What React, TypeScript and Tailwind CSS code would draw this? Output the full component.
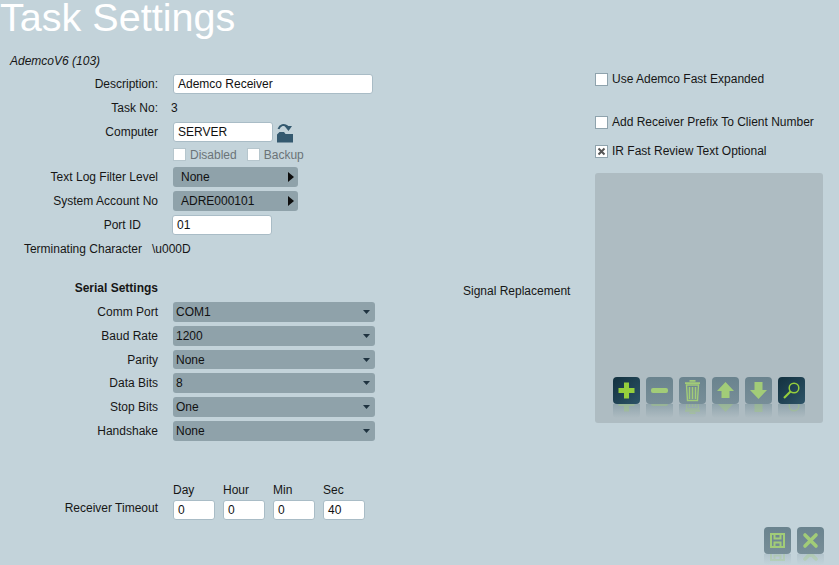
import React from 'react';

const labelCls = 'text-right text-[12px] text-[#161616] shrink-0';

// square tool button with the little mirrored glow underneath
const ToolButton = ({ active, faint, children }: { active?: boolean; faint?: boolean; children: React.ReactNode }) => (
    <div className="relative w-[27px] h-[27px]">
        <div
            className={
                active
                    ? 'w-full h-full rounded-[4px] bg-gradient-to-br from-[#13313f] to-[#2d5468] flex items-center justify-center'
                    : 'w-full h-full rounded-[4px] bg-gradient-to-b from-[#6a838e] to-[#778e98] flex items-center justify-center'
            }
        >
            <svg width="27" height="27" viewBox="0 0 27 27" className={active ? 'text-[#96cf3c]' : 'text-[#a2cc78]'}>{children}</svg>
        </div>
        <div
            className={
                faint
                    ? 'absolute left-0 top-[27px] w-[27px] h-[11px] overflow-hidden rounded-b-[4px] bg-gradient-to-b from-[#b4c6ce] to-transparent'
                    : 'absolute left-0 top-[27px] w-[27px] h-[14px] overflow-hidden rounded-b-[4px] bg-gradient-to-b from-[#90a4ac] to-transparent'
            }
        >
            <svg width="27" height="27" viewBox="0 0 27 27" className={`-scale-y-100 absolute left-0 top-[-14px] text-[#a2cc78] ${faint ? 'opacity-30' : 'opacity-40'}`}>{children}</svg>
        </div>
    </div>
);

const Check = ({ checked, disabled }: { checked?: boolean; disabled?: boolean }) => (
    <span className={`w-[13px] h-[13px] shrink-0 bg-white border flex items-center justify-center ${disabled ? 'border-[#b6c6cd]' : 'border-[#8fa3ad]'}`}>
        {checked && (
            <svg width="9" height="9" viewBox="0 0 9 9">
                <path d="M1.5 1.5L7.5 7.5M7.5 1.5L1.5 7.5" stroke="#555" strokeWidth="2" />
            </svg>
        )}
    </span>
);

const TextBox = ({ value, className }: { value: string; className: string }) => (
    <div className={`h-[20px] bg-white border border-[#a9bcc6] rounded-[3px] flex items-center text-[12px] text-[#111] ${className}`}>{value}</div>
);

const ArrowSelect = ({ value }: { value: string }) => (
    <div className="w-[125px] h-[20px] rounded-[3px] bg-[#8fa2aa] flex items-center justify-between pl-2 pr-[4px] text-[12px] text-[#111]">
        <span>{value}</span>
        <svg width="6" height="10" viewBox="0 0 6 10"><path d="M0 0L6 5L0 10Z" fill="#0d0d0d" /></svg>
    </div>
);

const serialRows = [
    { label: 'Comm Port', value: 'COM1', cls: 'h-[20px] mb-[4px]' },
    { label: 'Baud Rate', value: '1200', cls: 'h-[20px] mb-[4px]' },
    { label: 'Parity', value: 'None', cls: 'h-[19px] mb-[4px]' },
    { label: 'Data Bits', value: '8', cls: 'h-[20px] mb-[4px]' },
    { label: 'Stop Bits', value: 'One', cls: 'h-[20px] mb-[4px]' },
    { label: 'Handshake', value: 'None', cls: 'h-[20px] mb-0' },
];

const timeoutFields = [
    { label: 'Day', value: '0' },
    { label: 'Hour', value: '0' },
    { label: 'Min', value: '0' },
    { label: 'Sec', value: '40' },
];

export default function App() {
    return (
        <div className="w-[839px] h-[565px] overflow-hidden bg-[#c3d3da] font-['Liberation_Sans',Arial,sans-serif]">
            {/* title */}
            <div className="h-[52px] pt-[1px]">
                <h1 className="text-[39.6px] leading-[32px] font-normal text-white">Task Settings</h1>
            </div>

            <div className="flex">
                {/* left form */}
                <div className="w-[463px] shrink-0">
                    <p className="h-[16px] pl-[10px] mt-[1px] text-[12px] leading-[16px] italic text-[#161616]">AdemcoV6 (103)</p>

                    <div className="flex items-center mt-[5px] h-[20px]">
                        <span className={`${labelCls} w-[158px]`}>Description:</span>
                        <TextBox value="Ademco Receiver" className="ml-[15px] w-[200px] pl-[4px]" />
                    </div>
                    <div className="flex items-center mt-[4px] h-[20px]">
                        <span className={`${labelCls} w-[158px]`}>Task No:</span>
                        <span className="ml-[13px] text-[12px] text-[#161616]">3</span>
                    </div>
                    <div className="flex items-center mt-[4px] h-[20px]">
                        <span className={`${labelCls} w-[158px]`}>Computer</span>
                        <TextBox value="SERVER" className="ml-[15px] w-[100px] pl-[4px]" />
                        <svg width="18" height="21" viewBox="0 0 18 21" className="ml-[3px]">
                            <path d="M1 12.5L3.5 10H8L9.5 12H17V20.5H1Z" fill="#34596f" />
                            <path d="M2.5 7C4 3 8 1.5 11.5 4.5" fill="none" stroke="#34596f" strokeWidth="2" />
                            <path d="M8.5 4H16L12.5 9Z" fill="#34596f" />
                        </svg>
                    </div>
                    <div className="flex items-center mt-[5px] h-[15px] pl-[173px] text-[12px] text-[#6b7478]">
                        <Check disabled />
                        <span className="ml-[4px]">Disabled</span>
                        <span className="ml-[10px]"><Check disabled /></span>
                        <span className="ml-[4px]">Backup</span>
                    </div>
                    <div className="flex items-center mt-[5px] h-[20px]">
                        <span className={`${labelCls} w-[158px]`}>Text Log Filter Level</span>
                        <div className="ml-[15px]"><ArrowSelect value="None" /></div>
                    </div>
                    <div className="flex items-center mt-[4px] h-[20px]">
                        <span className={`${labelCls} w-[158px]`}>System Account No</span>
                        <div className="ml-[15px]"><ArrowSelect value="ADRE000101" /></div>
                    </div>
                    <div className="flex items-center mt-[4px] h-[20px]">
                        <span className={`${labelCls} w-[141px]`}>Port ID</span>
                        <TextBox value="01" className="ml-[31px] w-[100px] pl-[4px]" />
                    </div>
                    <div className="flex items-center mt-[4px] h-[20px]">
                        <span className={`${labelCls} w-[142px]`}>Terminating Character</span>
                        <span className="ml-[10px] text-[12px] text-[#161616]">\u000D</span>
                    </div>

                    <div className="flex items-center mt-[19px] h-[20px]">
                        <span className={`${labelCls} w-[158px] font-bold`}>Serial Settings</span>
                    </div>

                    {/* serial port dropdowns */}
                    <div className="mt-[4px]">
                        {serialRows.map((row) => (
                            <div key={row.label} className={`flex items-center ${row.cls}`}>
                                <span className={`${labelCls} w-[158px]`}>{row.label}</span>
                                <div className="ml-[15px] w-[202px] h-full rounded-[3px] bg-[#8fa2aa] flex items-center justify-between pl-[3px] pr-[5px] text-[12px] text-[#111]">
                                    <span>{row.value}</span>
                                    <svg width="7" height="4" viewBox="0 0 7 4"><path d="M0 0H7L3.5 4Z" fill="#1f3340" /></svg>
                                </div>
                            </div>
                        ))}
                    </div>

                    {/* timeout */}
                    <div className="flex mt-[39px]">
                        <span className={`${labelCls} w-[158px] mt-[19px]`}>Receiver Timeout</span>
                        <div className="ml-[15px] flex gap-[8px]">
                            {timeoutFields.map((f) => (
                                <div key={f.label} className="w-[42px]">
                                    <div className="h-[20px] text-[12px] leading-[20px] text-[#161616]">{f.label}</div>
                                    <TextBox value={f.value} className="pl-[4px]" />
                                </div>
                            ))}
                        </div>
                    </div>
                </div>

                {/* middle label */}
                <div className="w-[132px] shrink-0 pt-[230px] text-[12px] text-[#161616]">Signal Replacement</div>

                {/* right column */}
                <div className="w-[228px] shrink-0 pt-[19px]">
                    <div className="flex items-center h-[16px] text-[12px] text-[#161616]">
                        <Check />
                        <span className="ml-[4px]">Use Ademco Fast Expanded</span>
                    </div>
                    <div className="flex items-center h-[16px] mt-[27px] text-[12px] text-[#161616]">
                        <Check />
                        <span className="ml-[4px]">Add Receiver Prefix To Client Number</span>
                    </div>
                    <div className="flex items-center h-[16px] mt-[13px] text-[12px] text-[#161616]">
                        <Check checked />
                        <span className="ml-[4px]">IR Fast Review Text Optional</span>
                    </div>

                    <div className="mt-[14px] h-[250px] rounded-[3px] bg-[#aebcc2] flex items-end justify-center gap-[6px] pb-[19px]">
                        <ToolButton active>
                            <path d="M11 5.5H16V11H21.5V16H16V21.5H11V16H5.5V11H11Z" fill="currentColor" />
                        </ToolButton>
                        <ToolButton>
                            <rect x="5" y="11" width="17" height="5" rx="2" fill="currentColor" />
                        </ToolButton>
                        <ToolButton>
                            <path d="M7.5 8H19.5L18.5 23.5H8.5Z" fill="none" stroke="currentColor" strokeWidth="1.4" />
                            <path d="M10.5 10V22M13.5 10V22M16.5 10V22" fill="none" stroke="currentColor" strokeWidth="1.6" />
                            <path d="M6 6.2H21M10.5 3.8H16.5" stroke="currentColor" strokeWidth="1.8" />
                        </ToolButton>
                        <ToolButton>
                            <path d="M13.5 5L22 14H17.5V21H9.5V14H5Z" fill="currentColor" />
                        </ToolButton>
                        <ToolButton>
                            <path d="M9.5 5H17.5V13H22L13.5 22L5 13H9.5Z" fill="currentColor" />
                        </ToolButton>
                        <ToolButton active>
                            <circle cx="16" cy="11" r="4.8" fill="none" stroke="currentColor" strokeWidth="1.5" />
                            <path d="M12.5 14.5L6 21" stroke="currentColor" strokeWidth="2.2" />
                        </ToolButton>
                    </div>

                    {/* save / cancel */}
                    <div className="flex justify-end gap-[6px] mt-[104px] -mr-px">
                        <ToolButton faint>
                            <path d="M7 7H20V20H7Z M10.5 7V11.5H16.5V7 M10.5 20V15.5H16.5V20" fill="none" stroke="currentColor" strokeWidth="2" />
                        </ToolButton>
                        <ToolButton faint>
                            <path d="M8 8L19 19M19 8L8 19" stroke="currentColor" strokeWidth="3.6" strokeLinecap="round" />
                        </ToolButton>
                    </div>
                </div>
            </div>
        </div>
    );
}
